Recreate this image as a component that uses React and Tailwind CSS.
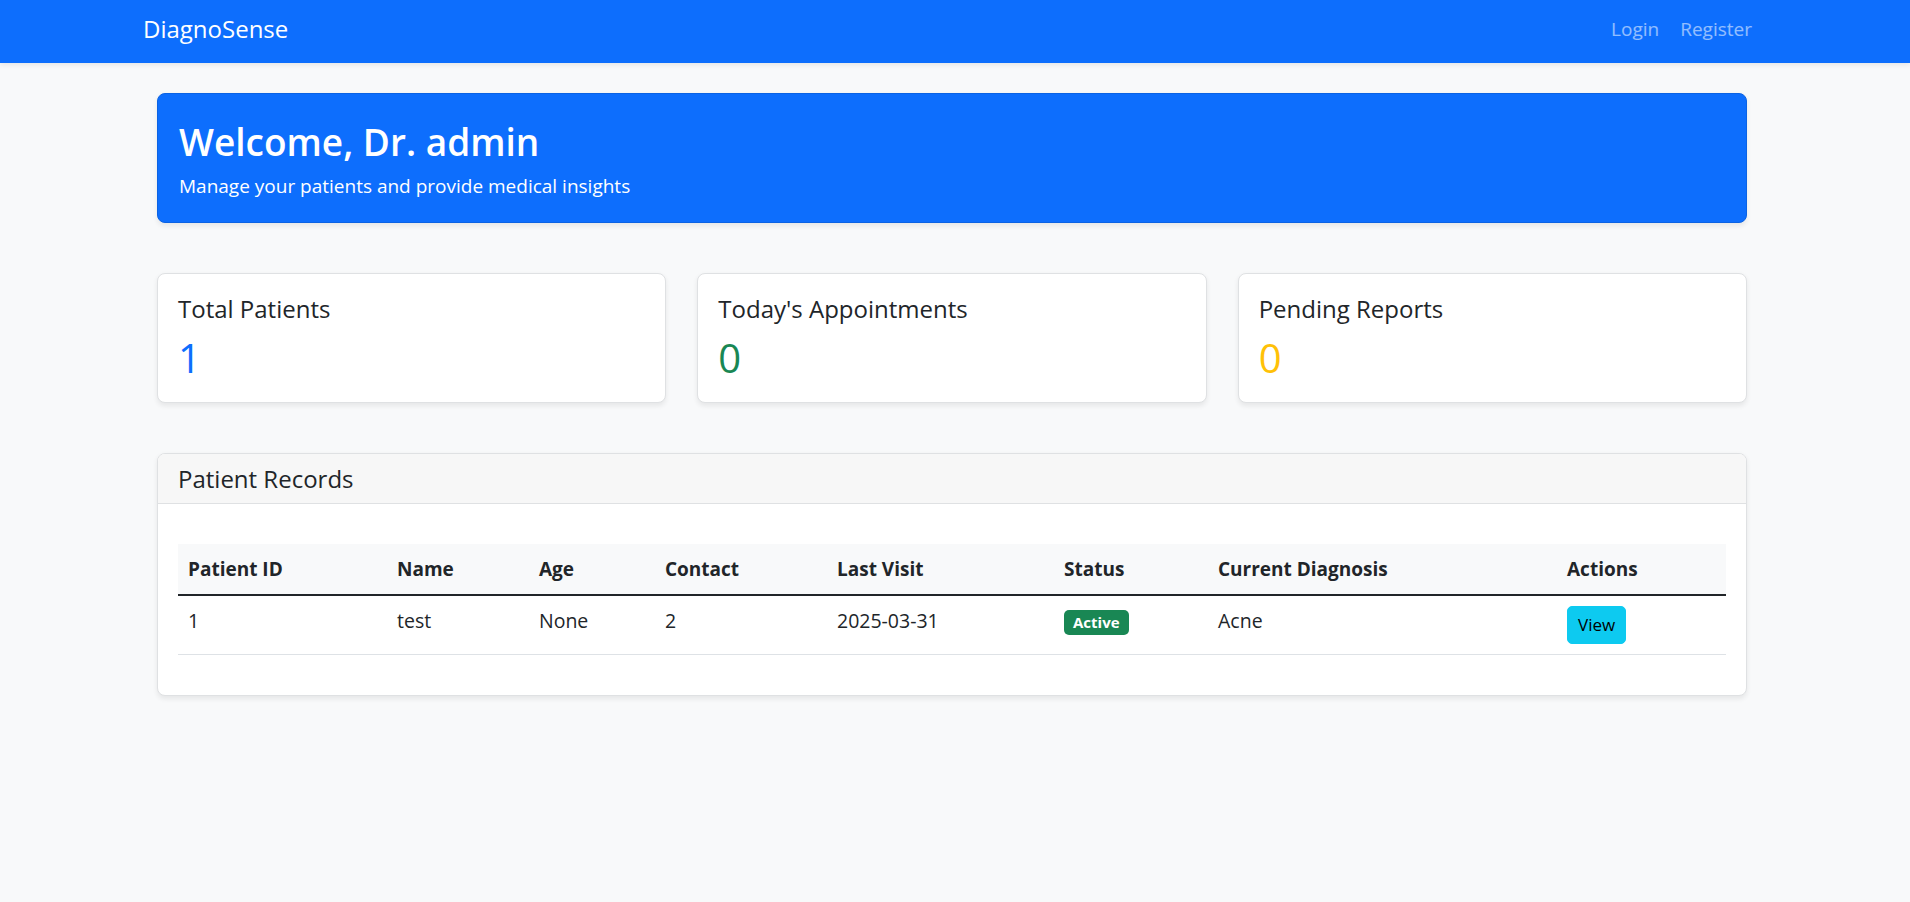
import React from 'react'

const stats = [
  { title: 'Total Patients', value: '1', color: 'text-[#0d6efd]' },
  { title: "Today's Appointments", value: '0', color: 'text-[#198754]' },
  { title: 'Pending Reports', value: '0', color: 'text-[#ffc107]' },
]

const patients = [
  { id: 1, name: 'test', age: 'None', contact: '2', lastVisit: '2025-03-31', status: 'Active', diagnosis: 'Acne' },
]

function Navbar() {
  return (
    <nav className="h-[63px] bg-[#0d6efd] flex items-center justify-between pl-[143px] pr-[158px] pb-[5px] shadow-[0_2px_5px_rgba(0,0,0,0.08)]">
      <a className="text-white text-[24px] leading-[1.5]">DiagnoSense</a>
      <div className="flex items-center gap-[21px] text-[19px] leading-[1.5] text-white/55">
        <a>Login</a>
        <a>Register</a>
      </div>
    </nav>
  )
}

function StatCard({ title, value, color }) {
  return (
    <div className="bg-white border border-[#dfe1e3] rounded-lg shadow-[0_2.5px_5px_rgba(0,0,0,0.075)] px-5 py-5">
      <h5 className="text-[24px] leading-[30px] mb-[10px]">{title}</h5>
      <h2 className={`text-[40px] leading-[48px] ${color}`}>{value}</h2>
    </div>
  )
}

export default function App() {
  return (
    <div className="min-h-screen bg-[#f8f9fa] text-[#212529] font-['Open_Sans','Noto_Sans',sans-serif]">
      <Navbar />

      <main className="pl-[157px] pr-[163px] pt-[30px]">
        {/* welcome banner */}
        <div className="bg-[#0d6efd] text-white rounded-lg border border-[#0b63e4] shadow-[0_2.5px_5px_rgba(0,0,0,0.075)] px-[21px] py-6">
          <h1 className="text-[37px] font-semibold leading-[48px] mb-2">Welcome, Dr. admin</h1>
          <p className="text-[19px] leading-[24px]">Manage your patients and provide medical insights</p>
        </div>

        <div className="grid grid-cols-3 gap-[31px] mt-[50px]">
          {stats.map((s) => (
            <StatCard key={s.title} {...s} />
          ))}
        </div>

        <div className="mt-[50px] bg-white border border-[#dfe1e3] rounded-lg shadow-[0_2.5px_5px_rgba(0,0,0,0.075)] overflow-hidden">
          <div className="h-[50px] bg-[#f7f7f7] border-b border-[#dfe1e3] px-5 flex items-center">
            <h5 className="text-[24px] leading-[30px]">Patient Records</h5>
          </div>
          <div className="px-5 pt-[40px] pb-5">
            <table className="w-full table-fixed border-collapse mb-5 text-[19.5px] leading-[30px]">
              <colgroup>
                <col className="w-[209px]" />
                <col className="w-[142px]" />
                <col className="w-[126px]" />
                <col className="w-[172px]" />
                <col className="w-[227px]" />
                <col className="w-[154px]" />
                <col className="w-[349px]" />
                <col />
              </colgroup>
              <thead>
                <tr className="bg-[#f8f9fa]">
                  {['Patient ID', 'Name', 'Age', 'Contact', 'Last Visit', 'Status', 'Current Diagnosis', 'Actions'].map((h) => (
                    <th key={h} className="text-left text-[19px] font-bold p-[10px] border-b-2 border-[#212529]">{h}</th>
                  ))}
                </tr>
              </thead>
              <tbody>
                {patients.map((p) => (
                  <tr key={p.id}>
                    <td className="p-[10px] align-top border-b border-[#dee2e6]">{p.id}</td>
                    <td className="p-[10px] align-top border-b border-[#dee2e6]">{p.name}</td>
                    <td className="p-[10px] align-top border-b border-[#dee2e6]">{p.age}</td>
                    <td className="p-[10px] align-top border-b border-[#dee2e6]">{p.contact}</td>
                    <td className="p-[10px] align-top border-b border-[#dee2e6]">{p.lastVisit}</td>
                    <td className="p-[10px] align-top border-b border-[#dee2e6]">
                      <span className="inline-block bg-[#198754] text-white text-[15px] font-bold leading-none px-[9px] py-[5px] rounded-[5px]">{p.status}</span>
                    </td>
                    <td className="p-[10px] align-top border-b border-[#dee2e6]">{p.diagnosis}</td>
                    <td className="p-[10px] align-top border-b border-[#dee2e6]">
                      <button className="bg-[#0dcaf0] border border-[#0dcaf0] text-black text-[17px] leading-[26px] px-[10px] py-[5px] rounded-[5px]">View</button>
                    </td>
                  </tr>
                ))}
              </tbody>
            </table>
          </div>
        </div>
      </main>
    </div>
  )
}
